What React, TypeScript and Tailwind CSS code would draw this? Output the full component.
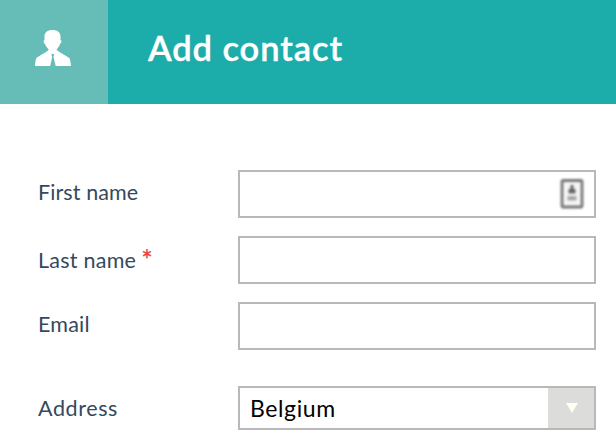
import type { ReactNode } from 'react';

function ContactIcon() {
  return (
    <svg className="h-9 w-9" viewBox="0 0 36 36" fill="#fff" aria-hidden="true">
      <path d="M17.500 0C22.600 0 25.500 2.500 25.500 6.500V10C26.800 10.200 26.600 13.200 25.300 13.500C24.600 16 22.500 18 21.500 19.800C23.500 22 30 25 34.500 28.300C35.300 30 35.700 33 36 36H20.700L18.500 27L19.200 24H16.300L17.200 27L15.200 36H0C.2 33 .5 30.500 1.200 28.300C5 25 11.500 22.500 13.800 19.800C12.800 18 10.400 16 9.700 13.500C8.400 13.200 8.200 10.200 9.500 10V6.500C9.500 2.500 12.400 0 17.500 0Z" />
    </svg>
  );
}

function CardIcon() {
  return (
    <svg className="h-8 w-6 blur-[0.8px]" viewBox="0 0 24 32" aria-hidden="true">
      <rect x="2" y="2.500" width="20" height="26.500" rx="1" fill="#f6f6f6" stroke="#777777" strokeWidth="2.800" />
      <path d="M10.500 7h3v4h2v4.500h-7V11h2Z" fill="#666666" />
      <path d="M7.500 18h9v4.500h-9Z" fill="#a8a8a8" />
    </svg>
  );
}

function Label({ className, children }: { className: string; children: ReactNode }) {
  return <label className={`w-[200px] shrink-0 whitespace-nowrap text-[#34495e] ${className}`}>{children}</label>;
}

export default function App() {
  return (
    <div className="h-[444px] w-[616px] overflow-hidden bg-white font-['Lato',sans-serif] text-[21.500px] leading-7">
      <header className="flex h-[104px] bg-[#1cacaa] text-white">
        <div className="flex w-[108px] items-center bg-[#66bdb7] pb-2 pl-[35px]">
          <ContactIcon />
        </div>
        <h1 className="pt-[26px] pl-10 text-[34.500px] leading-[44px] font-semibold tracking-[0.9px] [-webkit-text-stroke:0.4px_white]">Add contact</h1>
      </header>
      <form className="pt-[66px] pl-[38px]">
        <div className="flex h-12">
          <Label className="pt-2 tracking-[0.1px]">First name</Label>
          <div className="flex w-[358px] items-center justify-end border-2 border-[#b9b9b9] pr-[10px]">
            <CardIcon />
          </div>
        </div>
        <div className="mt-[18px] flex h-12">
          <Label className="flex pt-[10px] tracking-[0.25px]">
            Last name
            <span className="ml-[5px] text-[27px] text-[#ef3b3b] [-webkit-text-stroke:0.3px_#ef3b3b]">*</span>
          </Label>
          <div className="w-[358px] border-2 border-[#b9b9b9]" />
        </div>
        <div className="mt-[18px] flex h-12">
          <Label className="pt-2 tracking-[0.2px]">Email</Label>
          <div className="w-[358px] border-2 border-[#b9b9b9]" />
        </div>
        <div className="mt-9 flex h-11">
          <Label className="pt-2 tracking-[0.6px]">Address</Label>
          <div className="flex w-[358px] border-2 border-[#b9b9b9]">
            <span className="flex-1 pt-[6px] pl-[10px] text-[23px] tracking-[0.6px] text-black">Belgium</span>
            <div className="flex w-[46px] items-center justify-center bg-[#dcdddb] pl-[2px]">
              <svg className="h-[10px] w-3" viewBox="0 0 12 10" aria-hidden="true">
                <path d="M0 0h12L6 10Z" fill="#fffff4" />
              </svg>
            </div>
          </div>
        </div>
      </form>
    </div>
  );
}
